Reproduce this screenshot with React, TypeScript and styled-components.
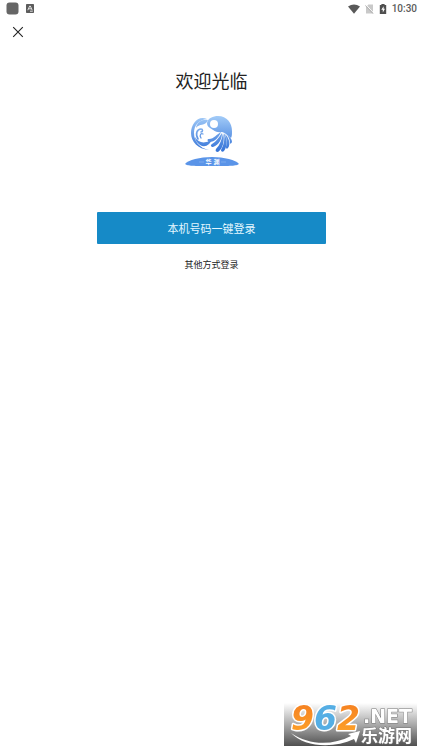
import React from "react";
import styled, { createGlobalStyle } from "styled-components";

const GlobalStyle = createGlobalStyle`
  * { box-sizing: border-box; }
  body {
    margin: 0;
    background: #fff;
    color: #222;
    font-family: "Noto Sans CJK SC", sans-serif;
  }
`;

const Screen = styled.div`
  display: flex;
  flex-direction: column;
  min-height: 100vh;
`;

const StatusBar = styled.div`
  display: flex;
  align-items: center;
  justify-content: space-between;
  height: 17px;
  padding: 0 6px;
`;

const StatusGroup = styled.div<{ $gap: number }>`
  display: flex;
  align-items: center;
  gap: ${(p) => p.$gap}px;
  svg { display: block; }
`;

const Clock = styled.time`
  font: 500 10px/16px Roboto, sans-serif;
  color: #5c5c5c;
`;

const TopBar = styled.header`
  display: flex;
  padding: 7px 10px;
`;

const CloseButton = styled.button`
  display: flex;
  padding: 2px;
  border: 0;
  background: none;
  cursor: pointer;
`;

const Main = styled.main`
  display: flex;
  flex-direction: column;
  align-items: center;
  padding: 20px 23%;
`;

const Title = styled.h1`
  margin: 0;
  font-size: 18px;
  line-height: 26px;
  font-weight: 400;
  color: #222;
`;

const AppLogo = styled.svg`
  display: block;
  margin-top: 22px;
`;

const PrimaryButton = styled.button`
  width: 100%;
  height: 32px;
  margin-top: 44px;
  padding: 0;
  border: 0;
  border-radius: 1px;
  background: #168ac7;
  color: #e4f7ff;
  font: inherit;
  font-size: 11px;
  cursor: pointer;
`;

const OtherButton = styled.button`
  margin-top: 14px;
  padding: 0;
  border: 0;
  background: none;
  color: #222;
  font: inherit;
  font-size: 9px;
  line-height: 14px;
  cursor: pointer;
`;

const Watermark = styled.svg`
  position: fixed;
  right: 6px;
  bottom: 6px;
  display: block;
  overflow: visible;
`;

const Digits = styled.text`
  font: italic 700 33px "DejaVu Sans", sans-serif;
  stroke: #fff;
  stroke-width: 3px;
  stroke-linejoin: round;
  paint-order: stroke;
`;

const SiteText = styled.text<{ $cjk?: boolean }>`
  font: ${(p) => (p.$cjk ? '700 17px "Noto Sans CJK SC"' : '700 19px "DejaVu Sans"')}, sans-serif;
  fill: #fff;
  stroke: #777;
  stroke-width: 1px;
  paint-order: stroke;
`;

export default function App() {
  return (
    <Screen>
      <GlobalStyle />
      <StatusBar>
        <StatusGroup $gap={7}>
          <svg width="13" height="13" viewBox="0 0 13 13" aria-hidden="true">
            <rect x="0.5" y="0.5" width="12" height="12" rx="3" fill="#666" />
          </svg>
          <svg width="8" height="9" viewBox="0 0 8 9" aria-hidden="true">
            <rect width="8" height="9" rx="0.7" fill="#5c5c5c" />
            <path d="M1.8 6.2 3.7 2h.6l1.9 4.2M2.6 4.8h2.8M4 7.2h2.8" fill="none" stroke="#eee" strokeWidth="0.9" />
          </svg>
        </StatusGroup>
        <StatusGroup $gap={5}>
          <svg width="12" height="10" viewBox="0 0 12 10" aria-hidden="true">
            <path d="M0 2.5Q6-1.7 12 2.5L6 9.8Z" fill="#595959" />
          </svg>
          <svg width="9" height="10" viewBox="0 0 9 10" aria-hidden="true">
            <path d="M3.4.5H8v9H1V3Z" fill="#c9c9c9" />
            <path d="m.9.7 8 8.5" stroke="#fff" strokeWidth="0.9" />
            <path d="m.3 1.4 7.8 8.2" stroke="#aaa" strokeWidth="0.9" />
          </svg>
          <svg width="8" height="10" viewBox="0 0 8 10" aria-hidden="true">
            <path d="M2.4 0h3.2v1h1.6v9H.8V1h1.6Z" fill="#4f4f4f" />
            <path d="M4.6 2.2 2.3 5.8h1.5v2.6l2.2-3.7H4.6Z" fill="#fff" />
          </svg>
          <Clock>10:30</Clock>
        </StatusGroup>
      </StatusBar>

      <TopBar>
        <CloseButton aria-label="关闭">
          <svg width="12" height="12" viewBox="0 0 12 12" aria-hidden="true">
            <path d="m1.2 1.2 9.6 9.6m0-9.6-9.6 9.6" stroke="#222" strokeWidth="1.1" />
          </svg>
        </CloseButton>
      </TopBar>

      <Main>
        <Title>欢迎光临</Title>
        <AppLogo width="54" height="53" viewBox="0 0 54 53" role="img" aria-label="华渊">
          <defs>
            <linearGradient id="wave" x1="0" y1="0" x2="0" y2="38" gradientUnits="userSpaceOnUse">
              <stop stopColor="#a6cef9" />
              <stop offset="1" stopColor="#2f6fd6" />
            </linearGradient>
          </defs>
          <g fill="url(#wave)">
            <path d="M22 8C23 3 28 1 33 1c9 0 14 7 14 15 0 3 0 5-1 7-3-2-5-5-9-6-7 1-8-2-12-4-2-1-3-3-3-5Z" />
            <path d="M22 4C13 0 6 9 6 18c0 9 7 16 18 17C14 33 9 26 9 18 9 10 14 5 22 4Z" />
            <path d="M23 5c-6-1-11 2-12 8 3-5 9-1 12-8Z" />
            <path d="M10 22c3 5 8 7 14 4l3-2c-2 6-7 9-12 6-3-2-5-5-5-8Z" />
            <path d="M36 17c-4 2-7 7-12 7-2 0-2 2 0 3 6 0 10-5 12-10Z" />
            <path d="M37 18c-3 4-6 9-10 11-2 1-1 3 1 3 6-2 9-8 9-14Z" />
            <path d="M38 18c-1 6-3 12-7 16-1 2 0 3 2 3 5-3 7-12 5-19Z" />
            <path d="M39 18c1 6 0 12-3 17 0 2 2 2 3 1 4-5 3-13 0-18Z" />
            <path d="M40 19c2 5 2 9 1 13 0 2 1 2 2 1 3-4 1-10-3-14Z" />
            <path d="M42 20c2 3 3 5 3 8 0 1 1 1 2-1 0-3-2-5-5-7Z" />
          </g>
          <circle cx="29" cy="9" r="4" fill="#fff" />
          <g fill="none" stroke="url(#wave)" strokeLinecap="round">
            <path d="M13 24c-3-5-1-10 3-10 2 0 2 3 0 3" strokeWidth="1.6" />
            <path d="M16 23c-2-3 0-5 2-4" strokeWidth="1.3" />
          </g>
          <path d="M0 49C3 45 15 42 27 42s24 3 27 7c-3 2-8 2-27 2S3 51 0 49Z" fill="#5a94e8" />
          <path d="M14 47h5m17 0h5" stroke="#91b9f2" strokeWidth="0.6" />
          <text x="20.5" y="49.2" fill="#fff" fontSize="6" fontWeight="700">华</text>
          <text x="28.5" y="49.2" fill="#fff" fontSize="6" fontWeight="700">渊</text>
        </AppLogo>
        <PrimaryButton>本机号码一键登录</PrimaryButton>
        <OtherButton>其他方式登录</OtherButton>
      </Main>

      <Watermark width="133" height="43" viewBox="0 0 133 43" role="img" aria-label="962.NET 乐游网">
        <defs>
          <linearGradient id="shade" x1="0" y1="0" x2="0" y2="1">
            <stop stopColor="#fff" />
            <stop offset="0.5" stopColor="#aaa" />
            <stop offset="1" stopColor="#505050" />
          </linearGradient>
          <linearGradient id="orange" x1="0" y1="0" x2="0" y2="1">
            <stop stopColor="#f47c20" />
            <stop offset="1" stopColor="#ffa72b" />
          </linearGradient>
        </defs>
        <rect width="133" height="43" fill="url(#shade)" />
        <path d="M7 30c17 12 41 13 60 3l-3-2 12-3-4 12-2-4C49 46 20 44 7 30Z" fill="#fff" />
        <Digits x="7" y="27" fill="url(#orange)">
          9<tspan fill="#55aee4">6</tspan>2
        </Digits>
        <SiteText x="79" y="20">.NET</SiteText>
        <SiteText $cjk x="77" y="39">乐游网</SiteText>
      </Watermark>
    </Screen>
  );
}
